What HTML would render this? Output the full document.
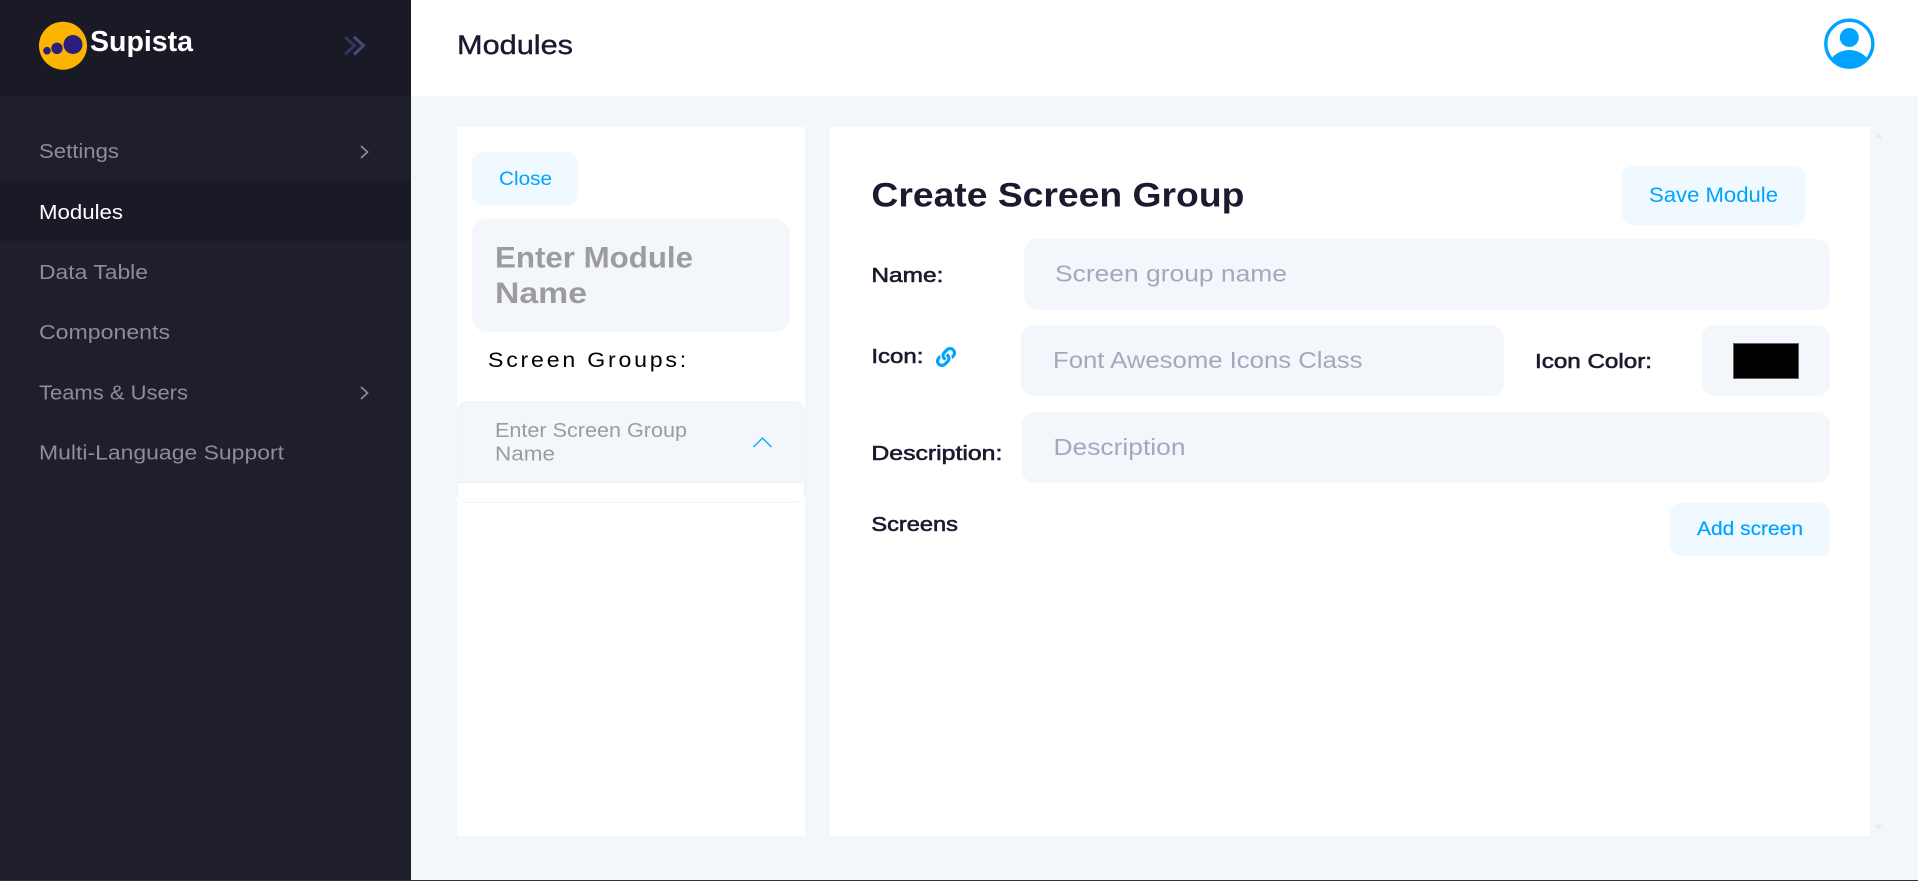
<!DOCTYPE html>
<html lang="en"><head><meta charset="utf-8"><title>Modules</title>
<style>
html,body{margin:0;padding:0;width:1918px;height:881px;overflow:hidden;background:#f3f7fa}
.b{position:absolute;box-sizing:border-box}
.in{background:#f3f7fb;border-radius:13px}
.btn{background:#f0f9ff;border-radius:11px}
svg{position:absolute;left:0;top:0}
text{font-family:"Liberation Sans",sans-serif}
.nav{font-size:20px;fill:#8d8c9e}
.lb{font-size:20.5px;fill:#1a1b2e;stroke:#1a1b2e;stroke-width:.6px}
.ph{font-size:23.5px;fill:#a6a7bd}
.bl{fill:#00a3ff}
</style></head><body>
<div class="b" style="left:0;top:0;width:411px;height:881px;background:#1e1e2d"></div>
<div class="b" style="left:0;top:0;width:411px;height:96px;background:#1a1a26"></div>
<div class="b" style="left:0;top:181px;width:411px;height:60px;background:#1a1a26"></div>
<div class="b" style="left:411px;top:0;width:1507px;height:96px;background:#fff"></div>
<div class="b" style="left:457px;top:127px;width:348px;height:709px;background:#fff"></div>
<div class="b" style="left:830px;top:127px;width:1040px;height:709px;background:#fff"></div>
<div class="b btn" style="left:472px;top:152px;width:106px;height:53px"></div>
<div class="b in" style="left:472px;top:219px;width:318px;height:113px;border-radius:15px"></div>
<div class="b" style="left:457px;top:401px;width:348px;height:102px;background:#fff;border:1px solid #f0f2f5;border-radius:11px;overflow:hidden"><div style="height:80px;background:#f3f7fb;border-bottom:1px solid #eef1f4"></div></div>
<div class="b btn" style="left:1622px;top:166px;width:183px;height:59px"></div>
<div class="b in" style="left:1024px;top:239px;width:806px;height:71px"></div>
<div class="b in" style="left:1021px;top:325px;width:483px;height:71px"></div>
<div class="b in" style="left:1702px;top:325px;width:128px;height:71px"></div>
<div class="b" style="left:1733px;top:343px;width:66px;height:36px;background:#000;border:1px solid #666"></div>
<div class="b in" style="left:1022px;top:412px;width:808px;height:71px"></div>
<div class="b btn" style="left:1670px;top:503px;width:160px;height:53px"></div>
<div class="b" style="left:0;top:879.500px;width:1918px;height:1.500px;background:#333"></div>
<svg width="1918" height="881" viewBox="0 0 1918 881">
<defs><clipPath id="av"><circle cx="1849.300" cy="43.700" r="24"/></clipPath></defs>
<!-- logo -->
<circle cx="63" cy="45.700" r="24" fill="#fdb400"/>
<circle cx="73" cy="44.500" r="9.500" fill="#2a1f7a"/>
<circle cx="57" cy="48.300" r="5.700" fill="#2a1f7a"/>
<circle cx="47" cy="50.700" r="3.800" fill="#2a1f7a"/>
<text x="90" y="51" font-size="29" font-weight="700" fill="#fff" textLength="103" lengthAdjust="spacingAndGlyphs">Supista</text>
<path d="M345 37l9.500 8.500-9.500 9" fill="none" stroke="#33365a" stroke-width="3"/>
<path d="M354 37l9.500 8.500-9.500 9" fill="none" stroke="#454a7a" stroke-width="3"/>
<!-- nav -->
<text class="nav" x="39" y="158" textLength="80" lengthAdjust="spacingAndGlyphs">Settings</text>
<path d="M361 146l6.500 6-6.500 6" fill="none" stroke="#8d8c9e" stroke-width="1.700"/>
<text class="nav" x="39" y="219" textLength="84" lengthAdjust="spacingAndGlyphs" style="fill:#fff">Modules</text>
<text class="nav" x="39" y="279" textLength="109" lengthAdjust="spacingAndGlyphs">Data Table</text>
<text class="nav" x="39" y="339" textLength="131" lengthAdjust="spacingAndGlyphs">Components</text>
<text class="nav" x="39" y="399.500" textLength="149" lengthAdjust="spacingAndGlyphs">Teams &amp; Users</text>
<path d="M361 387l6.500 6-6.500 6" fill="none" stroke="#8d8c9e" stroke-width="1.700"/>
<text class="nav" x="39" y="459.500" textLength="245" lengthAdjust="spacingAndGlyphs">Multi-Language Support</text>
<!-- header -->
<text x="457" y="54" font-size="26.500" fill="#1a1b2e" stroke="#1a1b2e" stroke-width=".4" textLength="116" lengthAdjust="spacingAndGlyphs">Modules</text>
<circle cx="1849.300" cy="43.700" r="23.500" fill="#fff"/>
<circle cx="1849.300" cy="37.500" r="9.500" fill="#00a3ff"/>
<ellipse cx="1849.300" cy="68" rx="21" ry="18" fill="#00a3ff" clip-path="url(#av)"/>
<circle cx="1849.300" cy="43.700" r="23.500" fill="none" stroke="#00a3ff" stroke-width="3.300"/>
<!-- scrollbar arrows -->
<path d="M1874.700 138.500l3.900-5 3.900 5z" fill="#e7ebef"/>
<path d="M1874.300 824.700l4 4.800 4-4.800z" fill="#e7ebef"/>
<!-- left panel -->
<text class="bl" x="499" y="185" font-size="19" textLength="53" lengthAdjust="spacingAndGlyphs">Close</text>
<text x="495" y="267.300" font-size="29.500" font-weight="700" fill="#9c9c9c" textLength="198" lengthAdjust="spacingAndGlyphs">Enter Module</text>
<text x="495" y="303" font-size="29.500" font-weight="700" fill="#9c9c9c" textLength="92" lengthAdjust="spacingAndGlyphs">Name</text>
<text x="488" y="367" font-size="21.500" fill="#000" letter-spacing="2.600" textLength="201" lengthAdjust="spacingAndGlyphs">Screen Groups:</text>
<text x="495" y="437" font-size="20" fill="#9c9c9c" textLength="192" lengthAdjust="spacingAndGlyphs">Enter Screen Group</text>
<text x="495" y="460.700" font-size="20" fill="#9c9c9c" textLength="60" lengthAdjust="spacingAndGlyphs">Name</text>
<path d="M753.500 447l9-9 9 9" fill="none" stroke="#00a3ff" stroke-width="1.300"/>
<!-- right panel -->
<text x="871.400" y="206.700" font-size="34" font-weight="700" fill="#1a1b2e" textLength="373" lengthAdjust="spacingAndGlyphs">Create Screen Group</text>
<text x="1649" y="202" font-size="21.500" class="bl" textLength="129" lengthAdjust="spacingAndGlyphs">Save Module</text>
<text class="lb" x="871.400" y="282" textLength="72" lengthAdjust="spacingAndGlyphs">Name:</text>
<text class="ph" x="1055" y="281.700" textLength="232" lengthAdjust="spacingAndGlyphs">Screen group name</text>
<text class="lb" x="871.400" y="363" textLength="52" lengthAdjust="spacingAndGlyphs">Icon:</text>
<svg x="936" y="347" width="20" height="20" viewBox="0 0 512 512"><path fill="#00a3ff" d="M326.612 185.391c59.747 59.809 58.927 155.698.36 214.59-.11.12-.24.25-.36.37l-67.2 67.2c-59.27 59.27-155.699 59.262-214.96 0-59.27-59.26-59.27-155.7 0-214.96l37.106-37.106c9.84-9.84 26.786-3.3 27.294 10.606.648 17.722 3.826 35.527 9.69 52.721 1.986 5.822.567 12.262-3.783 16.612l-13.087 13.087c-28.026 28.026-28.905 73.66-1.155 101.96 28.024 28.579 74.086 28.749 102.325.51l67.2-67.19c28.191-28.191 28.073-73.757 0-101.83-3.701-3.694-7.429-6.564-10.341-8.569a16.037 16.037 0 0 1-6.947-12.606c-.396-10.567 3.348-21.456 11.698-29.806l21.054-21.055c5.521-5.521 14.182-6.199 20.584-1.731a152.482 152.482 0 0 1 20.522 17.197zM467.547 44.449c-59.261-59.262-155.69-59.27-214.96 0l-67.2 67.2c-.12.12-.25.25-.36.37-58.566 58.892-59.387 154.781.36 214.59a152.454 152.454 0 0 0 20.521 17.196c6.402 4.468 15.064 3.789 20.584-1.731l21.054-21.055c8.35-8.35 12.094-19.239 11.698-29.806a16.037 16.037 0 0 0-6.947-12.606c-2.912-2.005-6.64-4.875-10.341-8.569-28.073-28.073-28.191-73.639 0-101.83l67.2-67.19c28.239-28.239 74.3-28.069 102.325.51 27.75 28.3 26.872 73.934-1.155 101.96l-13.087 13.087c-4.35 4.35-5.769 10.79-3.783 16.612 5.864 17.194 9.042 34.999 9.69 52.721.509 13.906 17.454 20.446 27.294 10.606l37.106-37.106c59.271-59.259 59.271-155.699.001-214.959z"/></svg>
<text class="ph" x="1053" y="368" textLength="309.500" lengthAdjust="spacingAndGlyphs">Font Awesome Icons Class</text>
<text class="lb" x="1535" y="368" textLength="117" lengthAdjust="spacingAndGlyphs">Icon Color:</text>
<text class="lb" x="871.400" y="460" textLength="131" lengthAdjust="spacingAndGlyphs">Description:</text>
<text class="ph" x="1053.500" y="455" textLength="132" lengthAdjust="spacingAndGlyphs">Description</text>
<text class="lb" x="871.400" y="531" textLength="86.500" lengthAdjust="spacingAndGlyphs">Screens</text>
<text class="bl" x="1697" y="535" font-size="19" stroke="#00a3ff" stroke-width=".2" textLength="106" lengthAdjust="spacingAndGlyphs">Add screen</text>
</svg>
</body></html>
